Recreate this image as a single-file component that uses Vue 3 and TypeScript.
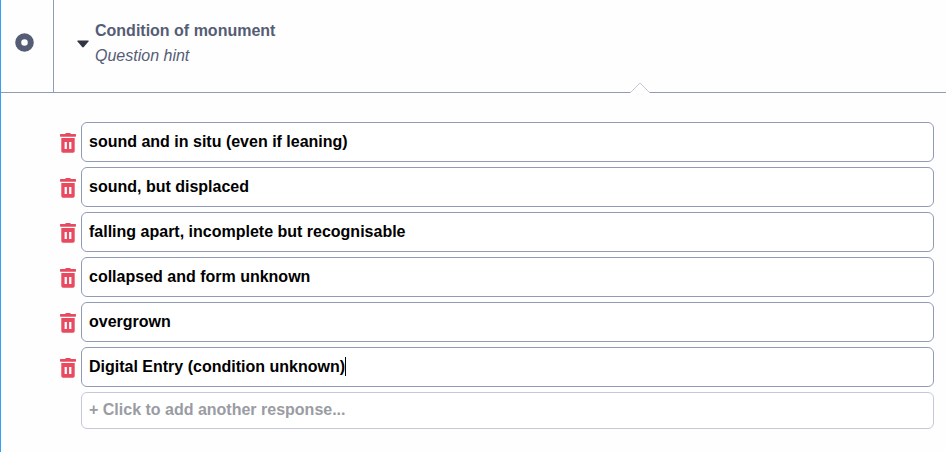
<script setup lang="ts">
import { ref } from 'vue'

interface Response {
  id: number
  text: string
}

const title = ref('Condition of monument')
const hint = ref('')
const expanded = ref(true)
const draft = ref('')
const activeId = ref(6)
const responses = ref<Response[]>([
  { id: 1, text: 'sound and in situ (even if leaning)' },
  { id: 2, text: 'sound, but displaced' },
  { id: 3, text: 'falling apart, incomplete but recognisable' },
  { id: 4, text: 'collapsed and form unknown' },
  { id: 5, text: 'overgrown' },
  { id: 6, text: 'Digital Entry (condition unknown)' },
])

let nextId = 7

function remove(id: number) {
  responses.value = responses.value.filter((r) => r.id !== id)
}

function add() {
  const text = draft.value.trim()
  if (!text) return
  responses.value.push({ id: nextId++, text })
  draft.value = ''
}

// Places the caret just after the last letter; 8px is the box's border and padding.
const pen = document.createElement('canvas').getContext('2d')
function caretLeft(text: string): string {
  if (!pen) return '8px'
  pen.font = 'bold 16px "Liberation Sans", Arial, sans-serif'
  return `${Math.round(pen.measureText(text).width) + 8}px`
}
</script>

<template>
  <main class="question">
    <header class="head">
      <div class="type">
        <svg class="type-icon" viewBox="0 0 19 19" aria-hidden="true">
          <circle cx="9.5" cy="9.5" r="6.3" />
        </svg>
      </div>
      <div class="summary">
        <button
          class="toggle"
          type="button"
          aria-label="Toggle responses"
          :aria-expanded="expanded"
          @click="expanded = !expanded"
        >
          <svg viewBox="0 0 12 8" aria-hidden="true">
            <path d="M0.8 0.5H11.2Q12 0.7 11.5 1.5L6.8 7.1Q6 7.8 5.2 7.1L0.5 1.5Q0 0.7 0.8 0.5Z" />
          </svg>
        </button>
        <div class="labels">
          <input v-model="title" class="title" type="text" aria-label="Question" />
          <input v-model="hint" class="hint" type="text" placeholder="Question hint" aria-label="Question hint" />
        </div>
      </div>
      <svg class="notch" viewBox="0 0 22 12" aria-hidden="true">
        <path class="notch-fill" d="M1 12V11L11 1L21 11V12Z" />
        <path class="notch-line" d="M1 11L11 1L21 11" />
      </svg>
    </header>

    <section v-if="expanded" class="responses">
      <div v-for="(item, i) in responses" :key="item.id" class="row">
        <button class="remove" type="button" :aria-label="`Delete response ${i + 1}`" @click="remove(item.id)">
          <svg viewBox="0 0 16 20" aria-hidden="true">
            <path
              fill-rule="evenodd"
              d="M6.3 0H9.7Q10.5 0 10.8 1H15.3Q16 1 16 1.7V3Q16 3.7 15.3 3.7H0.7Q0 3.7 0 3V1.7Q0 1 0.7 1H5.2Q5.5 0 6.3 0ZM1.3 5H14.7V18Q14.7 19.7 13 19.7H3Q1.3 19.7 1.3 18ZM4.6 9V16H6.9V9ZM9.1 9V16H11.4V9Z"
            />
          </svg>
        </button>
        <div class="field">
          <input
            v-model="item.text"
            class="box"
            type="text"
            :aria-label="`Response ${i + 1}`"
            @focus="activeId = item.id"
          />
          <span
            v-if="item.id === activeId"
            class="caret"
            :style="{ left: caretLeft(item.text) }"
            aria-hidden="true"
          ></span>
        </div>
      </div>
      <div class="row">
        <span class="spacer"></span>
        <div class="field">
          <input
            v-model="draft"
            class="box box-add"
            type="text"
            placeholder="+ Click to add another response..."
            aria-label="Add another response"
            @keyup.enter="add"
          />
        </div>
      </div>
    </section>
  </main>
</template>

<style>
body {
  background: #fefefe;
}
</style>

<style scoped>
.question {
  min-height: 100vh;
  box-sizing: border-box;
  border-left: 1px solid #35a0f5;
  font-family: "Liberation Sans", Arial, sans-serif;
  font-size: 16px;
  color: #555d75;
}

.head {
  position: relative;
  display: flex;
  border-bottom: 1px solid #929bb5;
}

.type {
  display: flex;
  align-items: center;
  flex: none;
  box-sizing: border-box;
  width: 53px;
  padding: 0 0 7px 14px;
  border-right: 1px solid #929bb5;
}

.type-icon {
  width: 19px;
  height: 19px;
  fill: none;
  stroke: #555d75;
  stroke-width: 6;
}

.summary {
  display: flex;
  flex: 1;
  align-items: flex-start;
  padding: 18px 12px 24px 23px;
}

.toggle {
  display: flex;
  width: 12px;
  margin: 22px 6px 0 0;
  padding: 0;
  border: 0;
  background: none;
}

.toggle svg {
  width: 12px;
  height: 8px;
  fill: #2f3542;
}

.labels {
  display: flex;
  flex: 1;
  flex-direction: column;
}

.title,
.hint {
  height: 25px;
  padding: 0;
  border: 0;
  outline: 0;
  background: none;
  color: #555d75;
  font: bold 16px "Liberation Sans", Arial, sans-serif;
}

.hint {
  font-weight: normal;
  font-style: italic;
}

.hint::placeholder {
  color: #555d75;
  opacity: 1;
}

.notch {
  position: absolute;
  right: 295px;
  bottom: -2px;
  width: 22px;
  height: 12px;
}

.notch-fill {
  fill: #fefefe;
}

.notch-line {
  fill: none;
  stroke: #c5c8d9;
}

.responses {
  display: flex;
  flex-direction: column;
  gap: 5px;
  padding: 29px 12px 23px 59px;
}

.row {
  display: flex;
  align-items: center;
}

.remove,
.spacer {
  width: 16px;
  margin-right: 5px;
  flex: none;
}

.remove {
  display: flex;
  padding: 2px 0 0;
  border: 0;
  background: none;
}

.remove svg {
  width: 16px;
  height: 20px;
  fill: #e84a5f;
}

.field {
  position: relative;
  display: flex;
  flex: 1;
}

.box {
  flex: 1;
  width: 100%;
  height: 40px;
  box-sizing: border-box;
  padding: 0 7px;
  border: 1px solid #929bb5;
  border-radius: 6px;
  outline: 0;
  background: #fff;
  color: #000;
  font: bold 16px "Liberation Sans", Arial, sans-serif;
}

.box-add {
  height: 37px;
  padding-bottom: 2px;
  border-color: #c5c8d9;
}

.box-add::placeholder {
  color: #9a9ca3;
  opacity: 1;
}

.caret {
  position: absolute;
  top: 10px;
  width: 1px;
  height: 19px;
  background: #000;
}
</style>
